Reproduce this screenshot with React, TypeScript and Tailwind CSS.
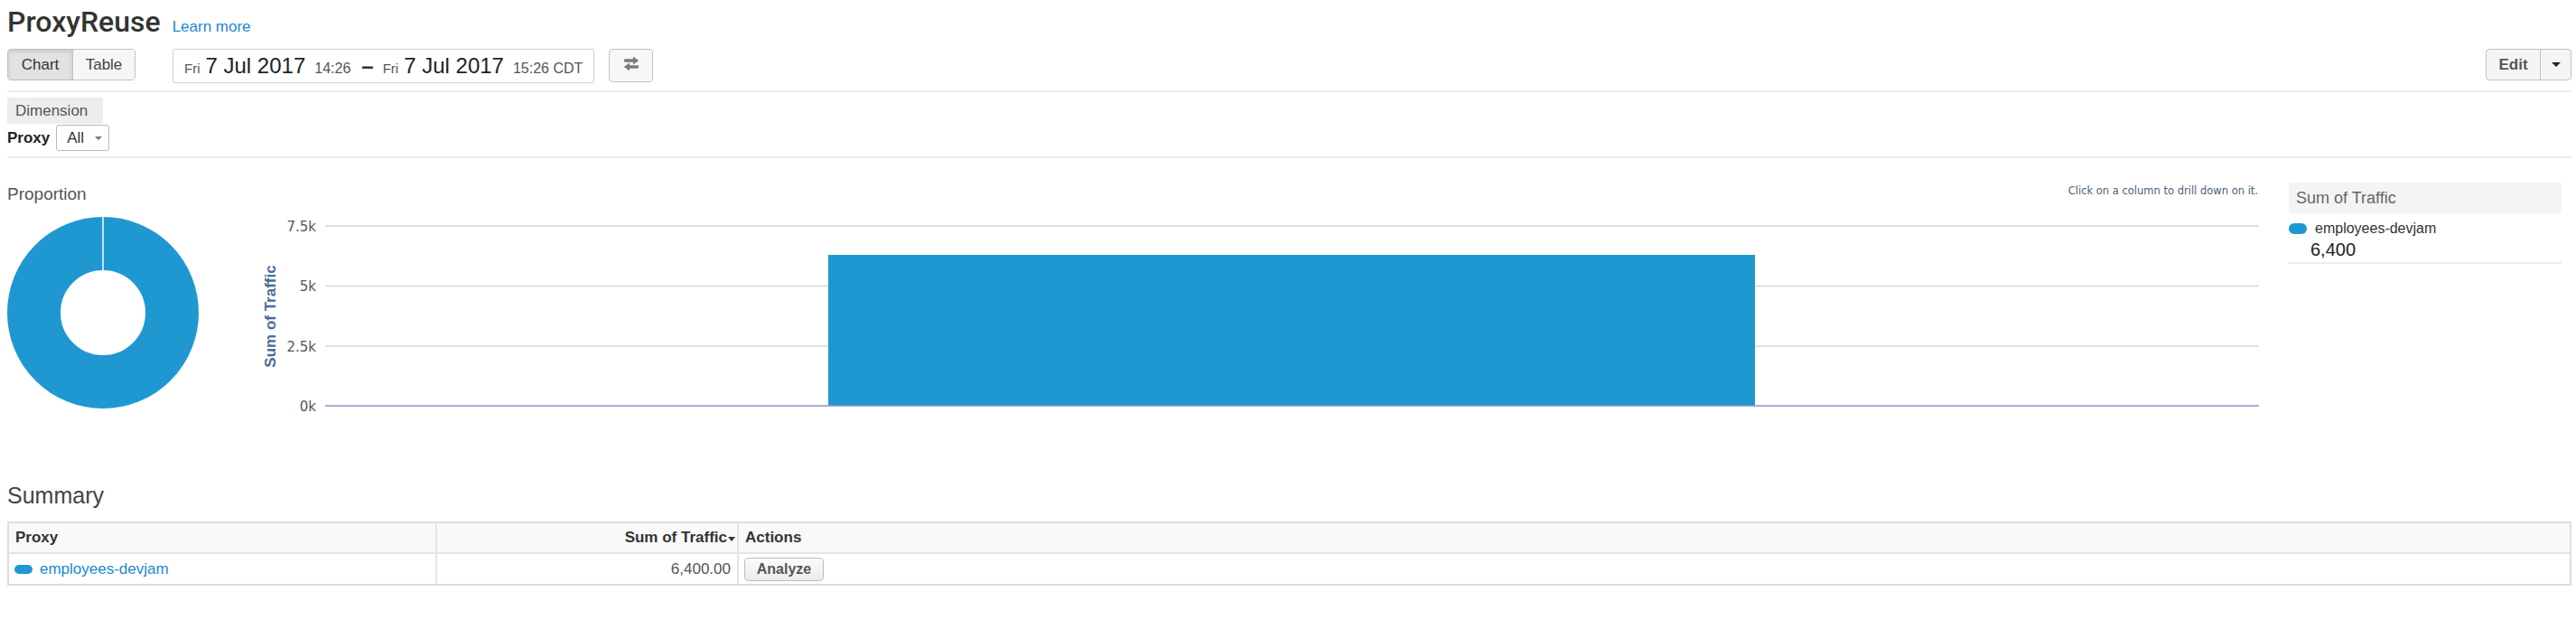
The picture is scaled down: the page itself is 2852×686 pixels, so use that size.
const BLUE = '#1f98d2'
const SANS = "font-['Liberation_Sans',Arial,sans-serif]"

function SwapIcon() {
  return (
    <svg width="18" height="17" viewBox="0 0 18 17" fill="#7a7a7a">
      <path d="M2.5 3.2h8.5V0.4l6.2 4.6-6.2 4.6V6.8H2.5a1.8 1.8 0 0 1 0-3.6z" />
      <path d="M15.5 10.2H7V7.4L0.8 12l6.2 4.6v-2.8h8.5a1.8 1.8 0 0 0 0-3.6z" />
    </svg>
  )
}

function Donut() {
  return (
    <svg width="212" height="212" viewBox="0 0 212 212">
      <circle cx="106" cy="106" r="76.5" fill="none" stroke={BLUE} strokeWidth="59" />
      <line x1="106" y1="0" x2="106" y2="59" stroke="#fff" strokeWidth="1.5" />
    </svg>
  )
}

function BarChart() {
  // plot area in svg coords: x 102..2243, y 32..231
  const ticks = [
    { label: '7.5k', y: 32 },
    { label: '5k', y: 98.5 },
    { label: '2.5k', y: 165 },
  ]
  return (
    <svg width="2252" height="250" viewBox="0 0 2252 250">
      {ticks.map((t) => (
        <g key={t.label}>
          <line x1="102" y1={t.y} x2="2243" y2={t.y} stroke="#d6d6d6" strokeWidth="1.5" />
          <text
            x="92"
            y={t.y + 5.5}
            textAnchor="end"
            fontFamily="'DejaVu Sans', Verdana, sans-serif"
            fontSize="15"
            fill="#555"
          >
            {t.label}
          </text>
        </g>
      ))}
      <rect x="659" y="64" width="1026" height="167" fill={BLUE} />
      <line x1="102" y1="231" x2="2243" y2="231" stroke="#8c95cd" strokeWidth="1.5" />
      <text
        x="92"
        y="236.5"
        textAnchor="end"
        fontFamily="'DejaVu Sans', Verdana, sans-serif"
        fontSize="15"
        fill="#555"
      >
        0k
      </text>
      <text
        x="47"
        y="132"
        transform="rotate(-90 47 132)"
        textAnchor="middle"
        fontFamily="'Liberation Sans', Arial, sans-serif"
        fontWeight="bold"
        fontSize="17"
        fill="#4a6c95"
      >
        Sum of Traffic
      </text>
    </svg>
  )
}

export default function App() {
  return (
    <div className={`${SANS} w-[2852px] h-[686px] bg-white pl-[8px] pr-[5px] text-[#333] overflow-hidden`}>
      {/* Title */}
      <div className="pt-[4px] flex items-baseline h-[44px]">
        <h1 className="font-['Roboto',sans-serif] font-medium text-[32px] leading-[40px] text-[#333]">ProxyReuse</h1>
        <a className="ml-[13px] text-[17px] text-[#1a8ad0]">Learn more</a>
      </div>

      {/* Toolbar */}
      <div className="mt-[10px] flex items-start h-[38px]">
        <div className="flex h-[35px] rounded-[4px] border border-[#b9c3c8] overflow-hidden">
          <button className="w-[71px] bg-[#e2e2e2] shadow-[inset_0_2px_4px_rgba(0,0,0,0.13)] text-[17px] text-[#333]">
            Chart
          </button>
          <button className="w-[69px] border-l border-[#b9c3c8] bg-[#f6f6f6] text-[17px] text-[#444]">Table</button>
        </div>

        <div className="ml-[41px] w-[467px] h-[38px] border border-[#cfd3d6] rounded-[2px] pl-[12px] flex items-baseline leading-[36px] whitespace-nowrap">
          <span className="text-[15px] text-[#555]">Fri</span>
          <span className="ml-[6px] text-[24px] text-[#222]">7 Jul 2017</span>
          <span className="ml-[10px] text-[16px] text-[#555]">14:26</span>
          <span className="ml-[12px] text-[24px] text-[#333] font-bold">–</span>
          <span className="ml-[10px] text-[15px] text-[#555]">Fri</span>
          <span className="ml-[6px] text-[24px] text-[#222]">7 Jul 2017</span>
          <span className="ml-[10px] text-[16px] text-[#555]">15:26 CDT</span>
        </div>

        <button className="ml-[16px] w-[49px] h-[37px] rounded-[4px] border border-[#b9c3c8] bg-[#f7f7f7] flex items-center justify-center pb-[4px]">
          <SwapIcon />
        </button>

        <div className="ml-auto flex h-[35px] rounded-[4px] border border-[#b9c3c8] bg-[#f5f5f5] overflow-hidden">
          <button className="w-[59px] text-[17px] font-bold text-[#555]">Edit</button>
          <button className="w-[34px] border-l border-[#b9c3c8] flex items-center justify-center">
            <span className="block w-0 h-0 border-l-[5px] border-r-[5px] border-t-[5px] border-l-transparent border-r-transparent border-t-[#222]" />
          </button>
        </div>
      </div>

      <div className="mt-[8px] h-[2px] bg-[#ececec]" />

      {/* Dimension filter */}
      <div className="mt-[6px] w-[106px] h-[29px] bg-[#ededed] pl-[9px] text-[17px] leading-[29px] text-[#555]">Dimension</div>
      <div className="mt-[1px] h-[29px] flex items-center">
        <span className="text-[17px] font-bold text-[#222]">Proxy</span>
        <div className="ml-[7px] w-[59px] h-[29px] border border-[#b5bcc0] rounded-[3px] bg-white flex items-center pl-[11px]">
          <span className="text-[17px] text-[#333]">All</span>
          <span className="ml-[12px] block w-0 h-0 border-l-[4px] border-r-[4px] border-t-[4px] border-l-transparent border-r-transparent border-t-[#777]" />
        </div>
      </div>
      <div className="mt-[6px] h-[2px] bg-[#ececec]" />

      {/* Charts */}
      <div className="mt-[28px] flex items-start h-[265px]">
        <div className="w-[250px]">
          <div className="text-[19px] leading-[24px] text-[#555]">Proportion</div>
          <div className="mt-[13px]">
            <Donut />
          </div>
        </div>

        <div className="flex-1 min-w-0">
          <div className="mt-[1px] pr-[10px] text-right font-['DejaVu_Sans',Verdana,sans-serif] text-[11.5px] leading-[14px] text-[#4a5f7a]">
            Click on a column to drill down on it.
          </div>
          <BarChart />
        </div>

        <div className="w-[302px] ml-[24px] mr-[11px] -mt-[1px]">
          <div className="h-[34px] bg-[#f4f4f4] pl-[8px] text-[18px] leading-[34px] text-[#666]">Sum of Traffic</div>
          <div className="mt-[7px] h-[20px] flex items-center">
            <span className="w-[20px] h-[12px] rounded-full" style={{ backgroundColor: BLUE }} />
            <span className="ml-[9px] text-[16px] leading-[20px] text-[#333]">employees-devjam</span>
          </div>
          <div className="mt-[1px] pl-[24px] text-[20px] leading-[24px] text-[#222]">6,400</div>
          <div className="mt-[2px] h-[2px] bg-[#eeeeee]" />
        </div>
      </div>

      {/* Summary */}
      <div className="mt-[65px] text-[25px] leading-[30px] text-[#444]">Summary</div>
      <div className="mt-[14px] border-2 border-[#dddddd]">
        <div className="grid grid-cols-[474px_334px_1fr] h-[34px] bg-[#f9f9f9] border-b-2 border-[#e4e4e4] text-[17px] font-bold text-[#333]">
          <div className="border-r-2 border-[#e4e4e4] pl-[7px] flex items-center">Proxy</div>
          <div className="border-r-2 border-[#e4e4e4] pr-[2px] flex items-center justify-end">
            Sum of Traffic
            <span className="ml-[1px] mt-[2px] block w-0 h-0 border-l-[4px] border-r-[4px] border-t-[5px] border-l-transparent border-r-transparent border-t-[#333]" />
          </div>
          <div className="pl-[7px] flex items-center">Actions</div>
        </div>
        <div className="grid grid-cols-[474px_334px_1fr] h-[33px] text-[17px]">
          <div className="border-r-2 border-[#e4e4e4] pl-[6px] flex items-center">
            <span className="w-[20px] h-[10px] rounded-full" style={{ backgroundColor: BLUE }} />
            <a className="ml-[8px] text-[#1a8ad0]">employees-devjam</a>
          </div>
          <div className="border-r-2 border-[#e4e4e4] pr-[7px] flex items-center justify-end text-[#555]">6,400.00</div>
          <div className="pl-[6px] flex items-center">
            <button className="w-[88px] h-[26px] rounded-[4px] border border-[#bcbcbc] bg-gradient-to-b from-[#fbfbfb] to-[#ececec] text-[16px] font-bold text-[#555]">
              Analyze
            </button>
          </div>
        </div>
      </div>
    </div>
  )
}
